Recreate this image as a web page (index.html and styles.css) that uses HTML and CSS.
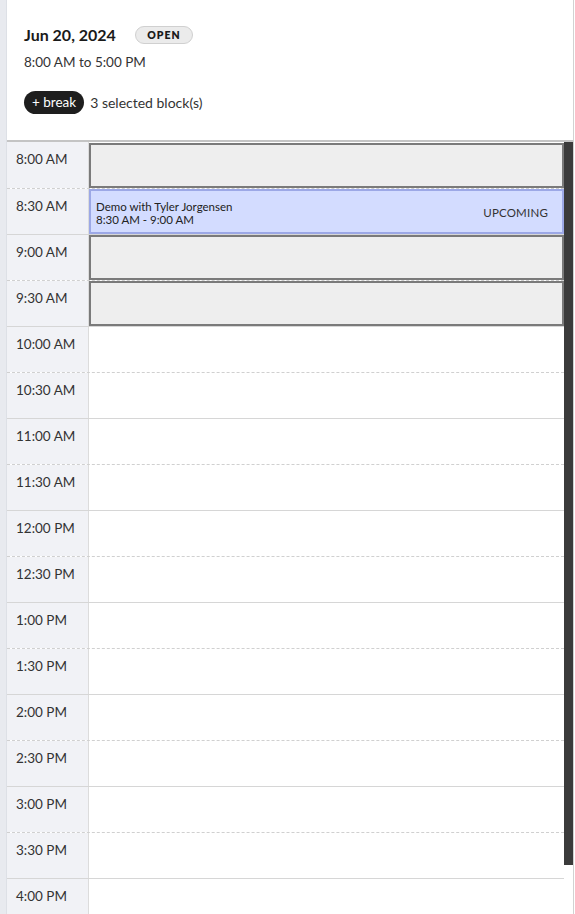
FILE: index.html
```html
<!DOCTYPE html>
<html>
<head>
<meta charset="utf-8">
<link rel="stylesheet" href="styles.css">
</head>
<body>
<div class="app">
  <div class="rail"></div>
  <div class="panel">
    <header class="day-head">
      <div class="title-row">
        <h1 class="date">Jun 20, 2024</h1>
        <span class="status">OPEN</span>
      </div>
      <div class="hours">8:00 AM to 5:00 PM</div>
      <div class="actions">
        <button class="break-btn">+ break</button>
        <span class="sel-count">3 selected block(s)</span>
      </div>
    </header>
    <div class="schedule-wrap">
      <div class="schedule">
        <div class="row first"><div class="time">8:00 AM</div><div class="slot"><div class="block selected"></div></div></div>
        <div class="row half"><div class="time">8:30 AM</div><div class="slot"><div class="block event"><div class="ev-text"><div class="ev-title">Demo with Tyler Jorgensen</div><div class="ev-time">8:30 AM - 9:00 AM</div></div><div class="ev-status">UPCOMING</div></div></div></div>
        <div class="row hour"><div class="time">9:00 AM</div><div class="slot"><div class="block selected"></div></div></div>
        <div class="row half"><div class="time">9:30 AM</div><div class="slot"><div class="block selected"></div></div></div>
        <div class="row hour"><div class="time">10:00 AM</div><div class="slot"></div></div>
        <div class="row half"><div class="time">10:30 AM</div><div class="slot"></div></div>
        <div class="row hour"><div class="time">11:00 AM</div><div class="slot"></div></div>
        <div class="row half"><div class="time">11:30 AM</div><div class="slot"></div></div>
        <div class="row hour"><div class="time">12:00 PM</div><div class="slot"></div></div>
        <div class="row half"><div class="time">12:30 PM</div><div class="slot"></div></div>
        <div class="row hour"><div class="time">1:00 PM</div><div class="slot"></div></div>
        <div class="row half"><div class="time">1:30 PM</div><div class="slot"></div></div>
        <div class="row hour"><div class="time">2:00 PM</div><div class="slot"></div></div>
        <div class="row half"><div class="time">2:30 PM</div><div class="slot"></div></div>
        <div class="row hour"><div class="time">3:00 PM</div><div class="slot"></div></div>
        <div class="row half"><div class="time">3:30 PM</div><div class="slot"></div></div>
        <div class="row hour"><div class="time">4:00 PM</div><div class="slot"></div></div>
        <div class="row half"><div class="time">4:30 PM</div><div class="slot"></div></div>
      </div>
      <div class="scroll-track"><div class="scroll-thumb"></div></div>
    </div>
  </div>
</div>
</body>
</html>
```

FILE: styles.css
```css
* { box-sizing: border-box; }
html, body {
  margin: 0;
  padding: 0;
  height: 914px;
  overflow: hidden;
  background: #ffffff;
  font-family: "Lato", "Noto Sans", sans-serif;
  color: #222;
}
.app {
  display: flex;
  height: 914px;
}
.rail {
  width: 7px;
  flex: none;
  background: #e8eaef;
  border-right: 1px solid #dde0e6;
}
.panel {
  width: 567px;
  flex: none;
  display: flex;
  flex-direction: column;
  border-right: 1px solid #d2d2d2;
  background: #fff;
}
.day-head {
  height: 142px;
  flex: none;
  padding: 25px 17px 0 17px;
  border-bottom: 2px solid #c4c4c4;
}
.title-row {
  display: flex;
  align-items: center;
  height: 20px;
  gap: 19px;
}
.date {
  margin: 0;
  font-size: 16px;
  font-weight: 700;
  color: #1a1a1a;
  line-height: 20px;
}
.status {
  display: inline-flex;
  align-items: center;
  justify-content: center;
  width: 58px;
  height: 18px;
  border-radius: 9px;
  background: #ebebeb;
  border: 1px solid #d0d0d0;
  font-size: 10.5px;
  font-weight: 800;
  letter-spacing: 1px;
  color: #1a1a1a;
}
.hours {
  margin-top: 8px;
  font-size: 13.5px;
  line-height: 18px;
  color: #333;
}
.actions {
  margin-top: 20px;
  display: flex;
  align-items: center;
  gap: 6px;
}
.break-btn {
  height: 23px;
  padding: 0 8px;
  border: none;
  border-radius: 12px;
  background: #1e1e1e;
  color: #fff;
  font-family: inherit;
  font-size: 13.5px;
  line-height: 23px;
}
.sel-count {
  font-size: 14px;
  color: #333;
}
.schedule-wrap {
  flex: 1;
  display: flex;
  min-height: 0;
}
.schedule {
  flex: 1;
  overflow: hidden;
}
.scroll-track {
  width: 9px;
  flex: none;
}
.scroll-thumb {
  height: 723px;
  background: #3b3b3b;
}
.row {
  display: flex;
  height: 46px;
}
.row.hour { border-top: 1px solid #d6d6d6; }
.row.half { border-top: 1px dashed #d0d0d0; }
.time {
  width: 82px;
  flex: none;
  background: #f1f2f6;
  border-right: 1px solid #dcdcdc;
  padding: 9px 0 0 9px;
  font-size: 13.5px;
  color: #333;
}
.slot {
  flex: 1;
  display: flex;
}
.block {
  flex: 1;
  border: 2px solid #7a7a7a;
  background: #eeeeee;
}
.row.first .block { margin-top: 1px; }
.block.event {
  background: #d3dcff;
  border-color: #9ca8e6;
  display: flex;
  align-items: center;
  justify-content: space-between;
  padding: 2px 14px 0 5px;
}
.ev-title, .ev-time {
  font-size: 11.5px;
  line-height: 13px;
  color: #222;
  white-space: nowrap;
}
.ev-status {
  font-size: 11.5px;
  color: #333;
  letter-spacing: 0.2px;
}
```
